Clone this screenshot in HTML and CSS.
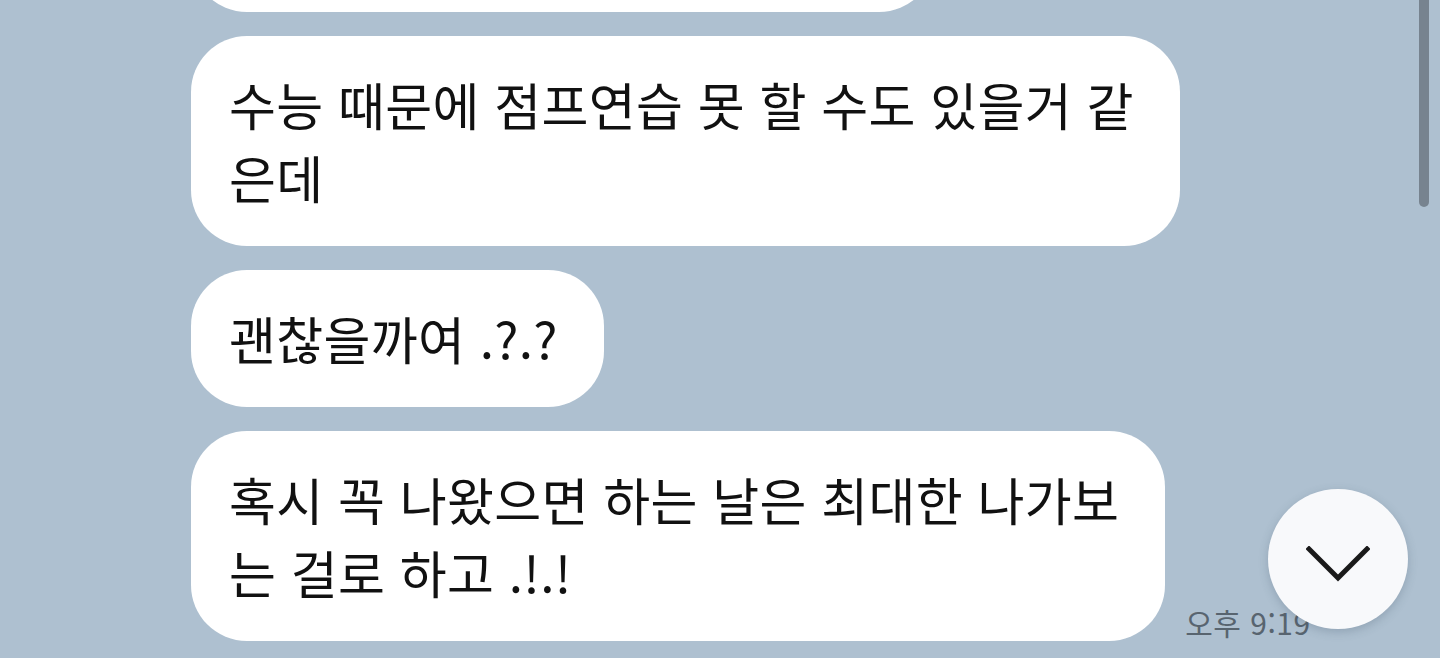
FILE: index.html
```html
<!DOCTYPE html>
<html lang="ko">
<head>
    <meta charset="UTF-8">
    <meta name="viewport" content="width=device-width, initial-scale=1.0">
    <title>채팅</title>
    <link rel="stylesheet" href="styles.css">
</head>
<body>
    <div class="chat">
        <div class="message-list">
            <div class="row">
                <div class="bubble bubble-cut"></div>
            </div>
            <div class="row">
                <div class="bubble">수능 때문에 점프연습 못 할 수도 있을거 같<br>은데</div>
            </div>
            <div class="row">
                <div class="bubble">괜찮을까여 .?.?</div>
            </div>
            <div class="row">
                <div class="bubble">혹시 꼭 나왔으면 하는 날은 최대한 나가보<br>는 걸로 하고 .!.!</div>
                <span class="time">오후 9:19</span>
            </div>
        </div>

        <div class="scrollbar"></div>

        <button class="scroll-down" aria-label="아래로">
            <svg width="64" height="36" viewBox="0 0 64 36">
                <polyline points="3,3 32,32 61,3" fill="none" stroke="#1a1a1a" stroke-width="5" stroke-linecap="square"/>
            </svg>
        </button>
    </div>
</body>
</html>
```

FILE: styles.css
```css
body {
    margin: 0;
    background-color: #aec0d0;
    font-family: "Noto Sans CJK KR", "Noto Sans", sans-serif;
    overflow: hidden;
}

.chat {
    position: relative;
    width: 1440px;
    height: 658px;
    overflow: hidden;
}

.message-list {
    display: flex;
    flex-direction: column;
    gap: 24px;
    padding-left: 191px;
    margin-top: -125px;
}

.row {
    display: flex;
    align-items: flex-end;
    gap: 20px;
}

.bubble {
    background-color: #fff;
    color: #111;
    font-size: 51px;
    line-height: 73px;
    padding: 32px 46px 32px 38px;
    border-radius: 56px;
    white-space: nowrap;
    letter-spacing: 0.3px;
}

.bubble-cut {
    width: 660px;
    height: 73px;
}

.time {
    font-size: 30px;
    color: #58646f;
    line-height: 30px;
    margin-bottom: 4px;
    letter-spacing: 0.5px;
}

.scrollbar {
    position: absolute;
    top: -10px;
    left: 1419px;
    width: 10px;
    height: 217px;
    border-radius: 5px;
    background-color: #77838f;
}

.scroll-down {
    position: absolute;
    left: 1268px;
    top: 489px;
    width: 140px;
    height: 140px;
    border: none;
    border-radius: 50%;
    background-color: #f8f9fb;
    box-shadow: 0 3px 10px rgba(60, 80, 100, 0.25);
    display: flex;
    align-items: center;
    justify-content: center;
    padding: 10px 0 0;
    cursor: pointer;
}
```
